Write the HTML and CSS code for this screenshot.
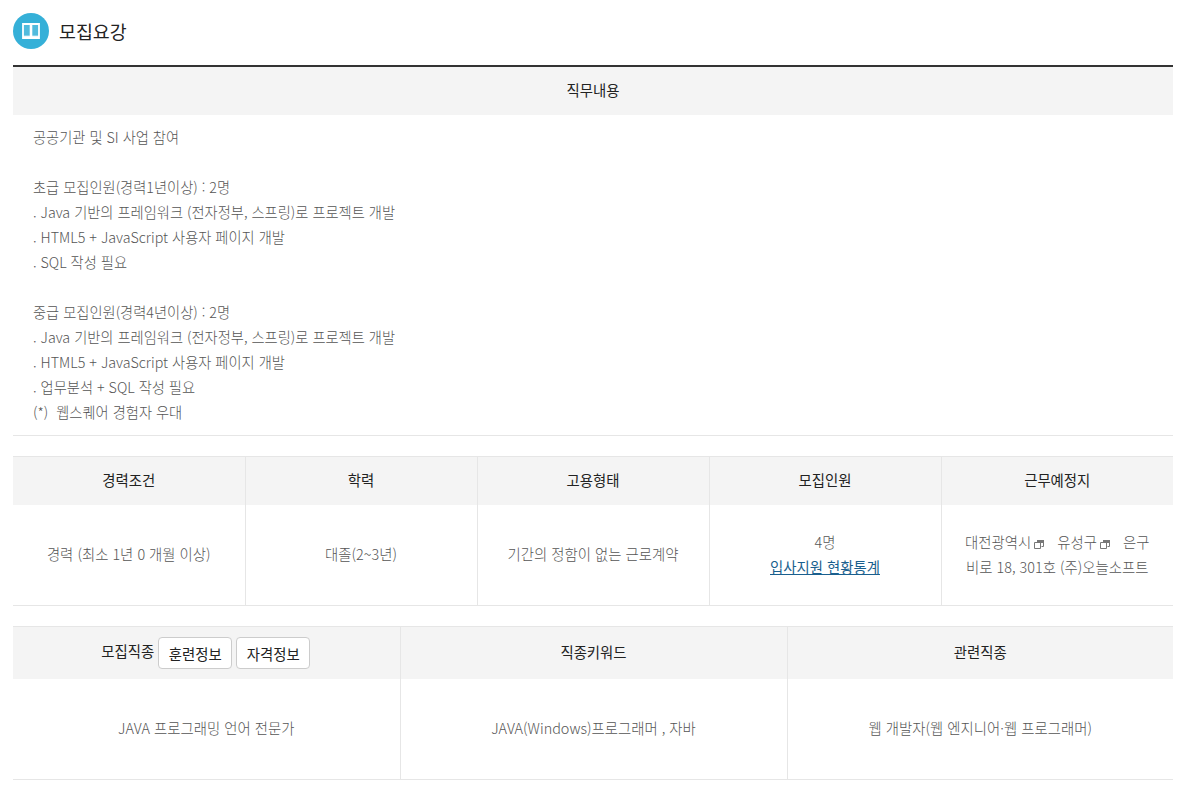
FILE: index.html
```html
<!DOCTYPE html>
<html lang="ko">
<head>
<meta charset="utf-8">
<title>모집요강</title>
<link rel="stylesheet" href="styles.css">
</head>
<body>
<header class="title">
  <span class="title-icon">
    <svg width="18" height="16" viewBox="0 0 18 16" aria-hidden="true">
      <path d="M1 1H17V15H1Z" fill="#fff" fill-opacity=".14" stroke="#fff" stroke-width="1.800"/>
      <path d="M7.700 1V15H10.300V1Z" fill="#fff"/>
      <path d="M1 13.300H17" stroke="#fff" stroke-width="1.200"/>
    </svg>
  </span>
  <h2>모집요강</h2>
</header>

<section class="duty">
  <h3 class="duty-head">직무내용</h3>
  <div class="duty-body">
    <p>공공기관 및 SI 사업 참여</p>
    <p>&nbsp;</p>
    <p>초급 모집인원(경력1년이상) : 2명</p>
    <p>. Java 기반의 프레임워크 (전자정부, 스프링)로 프로젝트 개발</p>
    <p>. HTML5 + JavaScript 사용자 페이지 개발</p>
    <p>. SQL 작성 필요</p>
    <p>&nbsp;</p>
    <p>중급 모집인원(경력4년이상) : 2명</p>
    <p>. Java 기반의 프레임워크 (전자정부, 스프링)로 프로젝트 개발</p>
    <p>. HTML5 + JavaScript 사용자 페이지 개발</p>
    <p>. 업무분석 + SQL 작성 필요</p>
    <p>(*)&nbsp; 웹스퀘어 경험자 우대</p>
  </div>
</section>

<table class="info five">
  <thead>
    <tr><th>경력조건</th><th>학력</th><th>고용형태</th><th>모집인원</th><th>근무예정지</th></tr>
  </thead>
  <tbody>
    <tr>
      <td>경력 (최소 1년 0 개월 이상)</td>
      <td>대졸(2~3년)</td>
      <td>기간의 정함이 없는 근로계약</td>
      <td>4명<br><a class="stat-link" href="#">입사지원 현황통계</a></td>
      <td class="place">대전광역시<svg class="ext" width="10" height="9" viewBox="0 0 10 9" aria-hidden="true"><path d="M3 0H10V3H3Z" fill="#777"/><path d="M9.500 3V6.500H7.500M3.500 3V2M.5 2.500H6.500V8.500H.5Z" fill="none" stroke="#777"/></svg>&nbsp; 유성구<svg class="ext" width="10" height="9" viewBox="0 0 10 9" aria-hidden="true"><path d="M3 0H10V3H3Z" fill="#777"/><path d="M9.500 3V6.500H7.500M3.500 3V2M.5 2.500H6.500V8.500H.5Z" fill="none" stroke="#777"/></svg>&nbsp; 은구<br>비로 18, 301호 (주)오늘소프트</td>
    </tr>
  </tbody>
</table>

<table class="info three">
  <colgroup>
    <col class="col-a">
    <col class="col-b">
    <col>
  </colgroup>
  <thead>
    <tr>
      <th class="wide">모집직종 <a class="chip" href="#">훈련정보</a> <a class="chip" href="#">자격정보</a></th>
      <th>직종키워드</th>
      <th>관련직종</th>
    </tr>
  </thead>
  <tbody>
    <tr>
      <td>JAVA 프로그래밍 언어 전문가</td>
      <td>JAVA(Windows)프로그래머 , 자바</td>
      <td>웹 개발자(웹 엔지니어·웹 프로그래머)</td>
    </tr>
  </tbody>
</table>
</body>
</html>
```

FILE: styles.css
```css
* { box-sizing: border-box; }

html, body { margin: 0; background: #fff; }

body {
  padding: 13px 13px 0;
  font-family: "Noto Sans CJK KR", "Noto Sans", sans-serif;
  font-size: 14.4px;
  font-weight: 300;
  color: #555;
  overflow: hidden;
}

.title {
  display: flex;
  align-items: center;
  gap: 10px;
  height: 36px;
  margin-bottom: 16px;
}

.title-icon {
  display: flex;
  align-items: center;
  justify-content: center;
  width: 36px;
  height: 36px;
  border-radius: 50%;
  background: #35b0d8;
}

.title h2 {
  margin: 0 0 1px;
  font-size: 18.4px;
  font-weight: 400;
  line-height: 36px;
  color: #222;
}

.duty {
  border-top: 2px solid #333;
  border-bottom: 1px solid #e6e6e6;
}

.duty-head {
  margin: 0;
  height: 48px;
  background: #f4f4f4;
  text-align: center;
  font-size: 14.4px;
  font-weight: 400;
  line-height: 45px;
  color: #222;
}

.duty-body {
  padding: 9px 20px 11px;
  font-size: 14.25px;
  line-height: 25px;
}

.duty-body p { margin: 0; }

.info {
  width: 100%;
  border-collapse: collapse;
  table-layout: fixed;
  margin-top: 20px;
  border-top: 1px solid #e6e6e6;
  border-bottom: 1px solid #e6e6e6;
}

.info th {
  background: #f4f4f4;
  font-weight: 400;
  color: #222;
  padding: 0 0 2px;
}

.info td {
  text-align: center;
  line-height: 25px;
  padding: 0 20px 2px;
}

.info th + th,
.info td + td { border-left: 1px solid #e6e6e6; }

.five th { height: 48px; }
.five td { height: 101px; }

.col-a, .col-b { width: 387px; }

.three th { height: 52px; }
.three td { height: 101px; }
.three .wide { padding: 0 1px 0 0; }

.ext {
  margin: 0 5px -1px 3px;
}

.stat-link {
  color: #1a5f8e;
  font-weight: 400;
  text-decoration: underline;
}

.chip {
  display: inline-block;
  height: 32px;
  padding: 0 9.5px;
  border: 1px solid #ccc;
  border-radius: 4px;
  background: #fff;
  color: #222;
  line-height: 31px;
  text-decoration: none;
  vertical-align: middle;
}
```
